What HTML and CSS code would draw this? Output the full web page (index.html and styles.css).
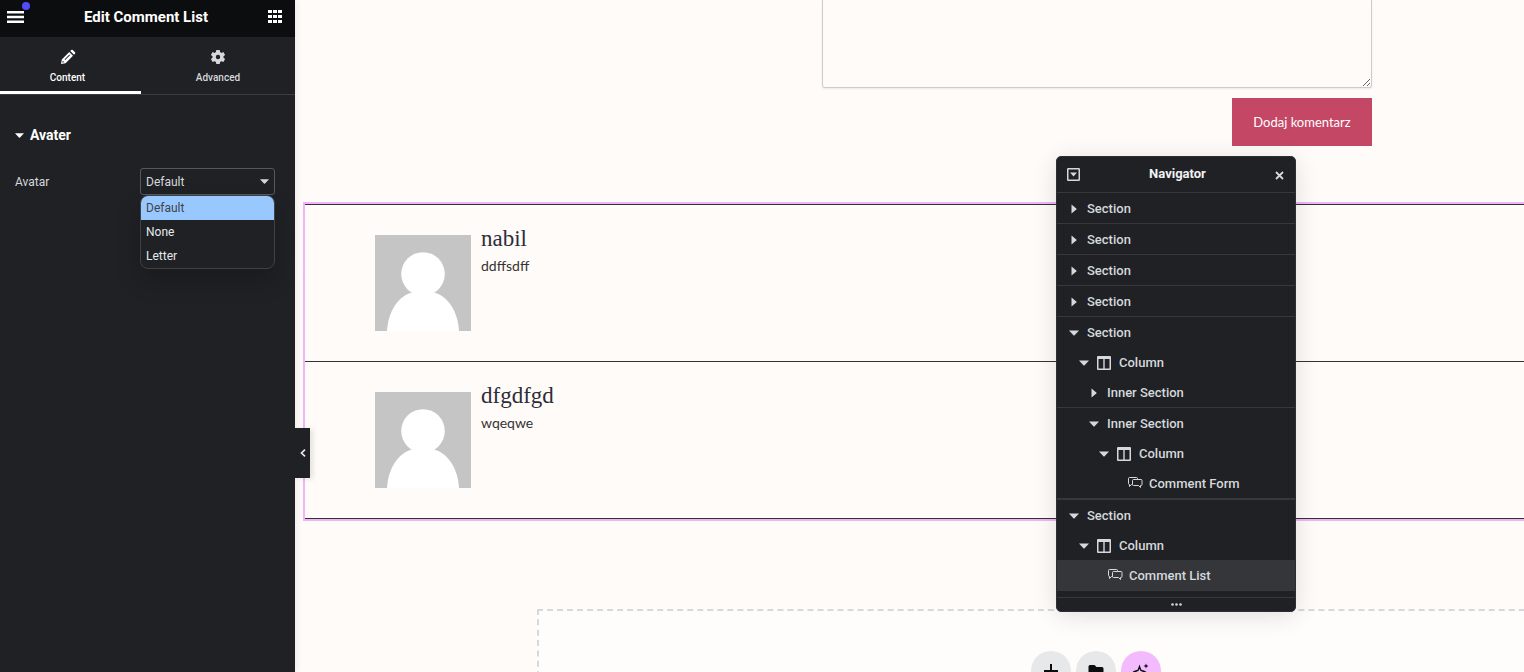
FILE: index.html
```html
<!DOCTYPE html>
<html lang="en">
<head>
<meta charset="utf-8">
<title>Edit Comment List</title>
<link rel="stylesheet" href="styles.css">
</head>
<body>
<svg class="sprite" aria-hidden="true">
  <symbol id="down" viewBox="0 0 10 10"><path d="M0 2.500h10L5.600 7.300q-.6.500-1.200 0z"/></symbol>
  <symbol id="right" viewBox="0 0 10 10"><path d="M2.500 0.500v9L7.300 5.600q.5-.6 0-1.200z"/></symbol>
  <symbol id="column" viewBox="0 0 16 14"><path fill-rule="evenodd" d="M2 0h11q1 0 1 1v12q0 1-1 1H1q-1 0-1-1V1q0-1 1-1zM1.500 3v9.500h4.800V3zM7.700 3v9.500h4.800V3z"/></symbol>
  <symbol id="comments" viewBox="0 0 16 14"><path fill="none" stroke="currentColor" d="M5.500 7.500H4.500L2.500 9.500v-2q-1 0-1-1v-5q0-1 1-1h7q1 0 1 1v1M6.500 2.500h7.500q1 0 1 1v4q0 1-1 1h-.5v2l-2-2h-5q-1 0-1-1v-4q0-1 1-1z"/></symbol>
  <symbol id="avatar" viewBox="0 0 96 96"><path fill="#c5c5c5" d="M0 0h96v96H0z"/><g fill="#fff"><circle cx="48" cy="39" r="21.800"/><path d="M12 96C13 77 23 60 39 57h18c16 3 26 20 27 39z"/></g></symbol>
</svg>
<div class="editor">
  <aside class="panel">
    <header class="panel-header">
      <button class="icon-button menu" aria-label="Menu"><svg width="17" height="12" viewBox="0 0 17 12"><path d="M0 0h17v2.400H0zM0 4.800h17v2.400H0zM0 9.600h17V12H0z"/></svg><span class="badge"></span></button>
      <h1>Edit Comment List</h1>
      <button class="icon-button" aria-label="Widgets"><svg width="14" height="13" viewBox="0 0 14 13"><path d="M0 0h4v3H0zM5 0h4v3H5zM10 0h4v3h-4zM0 5h4v3H0zM5 5h4v3H5zM10 5h4v3h-4zM0 10h4v3H0zM5 10h4v3H5zM10 10h4v3h-4z"/></svg></button>
    </header>
    <nav class="tabs">
      <button class="tab active"><svg width="16" height="16" viewBox="0 0 16 16"><path fill-rule="evenodd" d="M1 15l.8-4.600L9.200 3l3.800 3.800-7.400 7.400zM10.200 2l1-1q.8-.7 1.600 0L15 3.200q.7.800 0 1.600l-1 1zM2.700 11.700l-.3 1.900 1.900-.3zM4.500 10.500l.6.600L10 6.200l-.6-.6z"/></svg>Content</button>
      <button class="tab"><svg width="16" height="16" viewBox="0 0 16 16"><path fill-rule="evenodd" d="M6.300 1h3.400l.4 2.100 1.300.8 2-.8 1.700 3-1.600 1.200v1.400l1.600 1.300-1.700 2.900-2-.7-1.300.7-.4 2.100H6.300l-.4-2.100-1.300-.7-2 .7L.9 10l1.600-1.300V7.300L.9 6.100l1.700-3 2 .8 1.300-.8zM8 5.800a2.200 2.200 0 1 0 0 4.400 2.200 2.200 0 0 0 0-4.400z"/></svg>Advanced</button>
    </nav>
    <section class="controls">
      <h2><svg width="9" height="9"><use href="#down"/></svg>Avater</h2>
      <div class="control">
        <label for="avatar-mode">Avatar</label>
        <div class="select-wrap">
          <select id="avatar-mode"><option>Default</option><option>None</option><option>Letter</option></select>
          <svg class="select-arrow" width="9" height="9"><use href="#down"/></svg>
          <ul class="options" role="listbox" aria-label="Avatar">
            <li class="selected" role="option" aria-selected="true">Default</li>
            <li role="option">None</li>
            <li role="option">Letter</li>
          </ul>
        </div>
      </div>
    </section>
    <button class="collapse" aria-label="Hide panel"><svg width="6" height="8" viewBox="0 0 6 8"><path d="M5 .7L1.500 4 5 7.300" fill="none" stroke="currentColor" stroke-width="1.700"/></svg></button>
  </aside>
  <main class="canvas">
    <form class="comment-form">
      <textarea aria-label="Komentarz"></textarea>
      <button type="button">Dodaj komentarz</button>
    </form>
    <section class="comments">
      <article class="comment">
        <svg width="96" height="96"><use href="#avatar"/></svg>
        <div><h3>nabil</h3><p>ddffsdff</p></div>
      </article>
      <article class="comment">
        <svg width="96" height="96"><use href="#avatar"/></svg>
        <div><h3>dfgdfgd</h3><p>wqeqwe</p></div>
      </article>
    </section>
    <section class="add-section">
      <button aria-label="Add section"><svg width="14" height="14" viewBox="0 0 14 14"><path d="M6 0h2v6h6v2H8v6H6V8H0V6h6z"/></svg></button>
      <button aria-label="Add template"><svg width="16" height="14" viewBox="0 0 16 14"><path d="M2 1h4.500l2 2H14q1.500 0 1.500 1.500v7Q15.500 13 14 13H2Q.5 13 .5 11.500v-9Q.5 1 2 1z"/></svg></button>
      <button class="ai" aria-label="Build with AI"><svg width="16" height="16" viewBox="0 0 16 16"><path d="M13 .5l.7 1.800 1.800.7-1.800.7-.7 1.800-.7-1.800-1.800-.7 1.800-.7z"/><path fill="none" stroke="currentColor" stroke-width="1.300" d="M6.500 3.500l1.300 3.700 3.700 1.300-3.700 1.300-1.300 3.700-1.300-3.700-3.700-1.300 3.700-1.300z"/></svg></button>
    </section>
    <aside class="navigator">
      <header>
        <button class="icon-button" aria-label="Expand all"><svg width="13" height="13" viewBox="0 0 13 13"><rect x=".75" y=".75" width="11.500" height="11.500" rx=".5" fill="none" stroke="currentColor" stroke-width="1.500"/><path d="M3 4.500h7L6.500 8.500z"/></svg></button>
        <h2>Navigator</h2>
        <button class="icon-button close" aria-label="Close"><svg width="9" height="9" viewBox="0 0 9 9"><path d="M1 1l7 7M8 1L1 8" stroke="currentColor" stroke-width="1.800"/></svg></button>
      </header>
      <ul class="tree">
        <li class="section"><div class="row"><svg class="toggle"><use href="#right"/></svg>Section</div></li>
        <li class="section"><div class="row"><svg class="toggle"><use href="#right"/></svg>Section</div></li>
        <li class="section"><div class="row"><svg class="toggle"><use href="#right"/></svg>Section</div></li>
        <li class="section"><div class="row"><svg class="toggle"><use href="#right"/></svg>Section</div></li>
        <li class="section"><div class="row"><svg class="toggle"><use href="#down"/></svg>Section</div>
          <ul>
            <li><div class="row depth-1"><svg class="toggle"><use href="#down"/></svg><svg class="type"><use href="#column"/></svg>Column</div>
              <ul>
                <li class="section"><div class="row depth-2"><svg class="toggle"><use href="#right"/></svg>Inner Section</div></li>
                <li class="section"><div class="row depth-2"><svg class="toggle"><use href="#down"/></svg>Inner Section</div>
                  <ul>
                    <li><div class="row depth-3"><svg class="toggle"><use href="#down"/></svg><svg class="type"><use href="#column"/></svg>Column</div>
                      <ul><li><div class="row depth-4"><span class="toggle"></span><svg class="type"><use href="#comments"/></svg>Comment Form</div></li></ul>
                    </li>
                  </ul>
                </li>
              </ul>
            </li>
          </ul>
        </li>
        <li class="section"><div class="row"><svg class="toggle"><use href="#down"/></svg>Section</div>
          <ul>
            <li><div class="row depth-1"><svg class="toggle"><use href="#down"/></svg><svg class="type"><use href="#column"/></svg>Column</div>
              <ul><li><div class="row depth-2 current"><span class="toggle"></span><svg class="type"><use href="#comments"/></svg>Comment List</div></li></ul>
            </li>
          </ul>
        </li>
      </ul>
      <footer><svg width="11" height="3" viewBox="0 0 11 3"><circle cx="1.500" cy="1.500" r="1.300"/><circle cx="5.500" cy="1.500" r="1.300"/><circle cx="9.500" cy="1.500" r="1.300"/></svg></footer>
    </aside>
  </main>
</div>
</body>
</html>
```
FILE: styles.css
```css
* { box-sizing: border-box; }
body { margin: 0; font-family: Roboto, sans-serif; background: #fffbf8; }
h1, h2, h3, p, ul { margin: 0; padding: 0; }
ul { list-style: none; }
button { font-family: inherit; border: 0; padding: 0; background: none; color: inherit; cursor: pointer; }
svg { display: block; flex: none; fill: currentColor; }
.sprite { position: absolute; width: 0; height: 0; }

.editor { display: flex; height: 100vh; overflow: hidden; }

.panel {
  position: relative;
  z-index: 1;
  flex: 0 0 295px;
  background: #1f2124;
  color: #d5d8dc;
  box-shadow: 0 0 8px rgba(0, 0, 0, .1);
}
.panel-header {
  display: flex;
  align-items: center;
  justify-content: space-between;
  height: 37px;
  padding: 0 13px 4px 7px;
  background: #0c0d0e;
  color: #fff;
}
.panel-header h1 { font-size: 15px; line-height: 20px; font-weight: 700; }
.icon-button { display: flex; align-items: center; }
.menu { position: relative; }
.badge { position: absolute; top: -9px; right: -6px; width: 8px; height: 8px; border-radius: 50%; background: #524cff; }

.tabs { display: grid; grid-template-columns: 141px 1fr; height: 58px; border-bottom: 1px solid #3a3c40; }
.tab {
  display: flex;
  flex-direction: column;
  align-items: center;
  gap: 6px;
  padding-top: 12px;
  border-bottom: 3px solid transparent;
  font-size: 10px;
  line-height: 14px;
  font-weight: 500;
}
.tab.active { padding-right: 6px; border-color: #fff; color: #fff; }

.controls { padding: 30px 20px 0 15px; }
.controls h2 { display: flex; align-items: center; gap: 6px; font-size: 14px; line-height: 20px; font-weight: 700; color: #fff; }
.control { display: flex; align-items: center; justify-content: space-between; margin-top: 23px; font-size: 12px; }
.select-wrap { position: relative; width: 135px; }
select {
  appearance: none;
  display: block;
  width: 100%;
  height: 27px;
  padding: 0 5px;
  border: 1px solid #515962;
  border-radius: 3px;
  background: #1f2124;
  color: #d5d8dc;
  font: 12px Roboto, sans-serif;
}
.select-arrow { position: absolute; top: 9px; right: 6px; pointer-events: none; }
.options {
  position: absolute;
  top: 27px;
  left: 0;
  right: 0;
  border: 1px solid #3f4145;
  border-radius: 8px;
  overflow: hidden;
  background: #1f2124;
  color: #e6e9ec;
  line-height: 24px;
  box-shadow: 0 12px 24px rgba(0, 0, 0, .2);
}
.options li { padding: 0 5px; }
.options .selected { background: #99c8ff; color: #3f444b; }
.collapse {
  position: absolute;
  top: 428px;
  left: 100%;
  display: flex;
  align-items: center;
  justify-content: center;
  width: 15px;
  height: 50px;
  background: #1f2124;
  color: #e6e9ec;
  box-shadow: 3px 1px 5px rgba(0, 0, 0, .1);
}

.canvas { position: relative; flex: 1; min-width: 0; overflow: hidden; font-family: Lato, sans-serif; color: #333; }
.comment-form { display: flex; flex-direction: column; align-items: flex-end; gap: 10px; padding-right: 152px; }
.comment-form textarea {
  width: 550px;
  max-width: 100%;
  height: 88px;
  border: 1px solid #ccc;
  border-top: 0;
  border-radius: 0 0 3px 3px;
  background: transparent;
  box-shadow: 0 1px 2px rgba(0, 0, 0, .08);
  resize: vertical;
}
.comment-form button { width: 140px; height: 48px; background: #c44866; color: #fff; font-size: 13px; }

.comments { margin: 56px 0 0 8px; border: 2px solid #f0b4fb; border-right: 0; }
.comment { display: flex; gap: 10px; padding: 30px 70px; border-bottom: 1px solid #333; }
.comment:first-child { border-top: 1px solid #333; }
.comment div { margin-top: -10px; }
.comment h3 { font: 400 23px/28px "Liberation Serif", serif; color: #2d2d3a; }
.comment p { font-size: 14px; line-height: 26px; }

.add-section {
  display: flex;
  justify-content: center;
  gap: 5px;
  height: 120px;
  margin: 88px -131px 0 242px;
  padding-top: 40px;
  border: 2px dashed #d5d8dc;
  background: #fffdfc;
}
.add-section button { display: grid; place-items: center; width: 40px; height: 40px; border-radius: 50%; background: #e6e8ea; color: #0c0d0e; }
.add-section .ai { background: #f3bafd; }

.navigator {
  position: absolute;
  top: 156px;
  right: 228px;
  width: 240px;
  border: 1px solid #2c2e32;
  border-radius: 5px;
  overflow: hidden;
  background: #1f2124;
  color: #d5d8dc;
  font: 500 13px/30px Roboto, sans-serif;
  box-shadow: 0 4px 24px rgba(0, 0, 0, .12);
}
.navigator header { display: flex; align-items: center; justify-content: space-between; height: 36px; padding: 0 11px 0 10px; border-bottom: 1px solid #36383c; }
.navigator h2 { padding-bottom: 2px; font-size: 13px; line-height: 20px; font-weight: 700; color: #f1f2f3; }
.close { padding-top: 2px; }
.section { border-bottom: 1px solid #36383c; }
.row { display: flex; align-items: center; gap: 6px; height: 30px; padding: 1px 0 0 12px; line-height: 31px; }
.toggle { width: 10px; height: 10px; margin-right: 2px; }
.type { width: 16px; height: 14px; }
.row.depth-1 { padding-left: 22px; }
.row.depth-2 { padding-left: 32px; }
.row.depth-3 { padding-left: 42px; }
.row.depth-4 { padding-left: 52px; }
.current { background: #34363a; }
.navigator footer { display: flex; align-items: center; justify-content: center; height: 14px; margin-top: 6px; border-top: 1px solid #36383c; }
```
